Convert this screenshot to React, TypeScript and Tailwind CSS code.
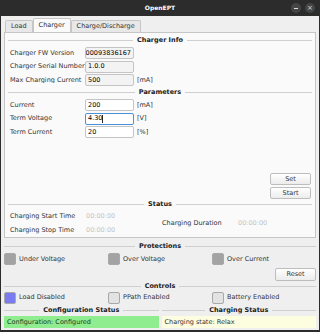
import React from 'react';

const FONT = { fontFamily: '"DejaVu Sans", "Liberation Sans", sans-serif' };

const Header: React.FC<{ title: string; className?: string }> = ({ title, className = '' }) => (
  <div className={`flex items-center gap-[4px] h-[10px] ${className}`}>
    <div className="flex-1 h-px bg-[#cfcfcf]" />
    <span className="font-bold text-[6.5px] text-[#202020] leading-none">{title}</span>
    <div className="flex-1 h-px bg-[#cfcfcf]" />
  </div>
);

const Field: React.FC<{
  label: string;
  value: string;
  unit?: string;
  readOnly?: boolean;
  focused?: boolean;
  scrolled?: boolean;
}> = ({ label, value, unit, readOnly, focused, scrolled }) => (
  <div className="flex items-center h-[12px]">
    <span className="w-[77px] shrink-0 pl-[2px] whitespace-nowrap overflow-hidden text-[#333]">{label}</span>
    <div
      className={`w-[49px] h-[12px] shrink-0 rounded-[2px] border flex items-center px-[2px] overflow-hidden whitespace-nowrap ${
        scrolled ? 'justify-end' : ''
      } ${focused ? 'border-[#4a90d9] bg-white' : readOnly ? 'border-[#c4c4c4] bg-[#f3f3f3]' : 'border-[#c4c4c4] bg-white'}`}
    >
      <span className="shrink-0">{value}</span>
      {focused && <span className="w-px h-[8px] bg-[#222]" />}
    </div>
    {unit && <span className="ml-[3px] text-[#333]">{unit}</span>}
  </div>
);

const Check: React.FC<{ label: string; color: string }> = ({ label, color }) => (
  <div className="flex items-center gap-[3px] w-[104px]">
    <div className={`w-[12px] h-[12px] rounded-[2px] border border-[#a8a8a8] ${color}`} />
    <span className="text-[#333]">{label}</span>
  </div>
);

const Btn: React.FC<{ label: string; className?: string }> = ({ label, className = '' }) => (
  <div
    className={`flex items-center justify-center rounded-[2px] border border-[#bdbdbd] bg-gradient-to-b from-[#ffffff] to-[#ececec] text-[#333] ${className}`}
  >
    {label}
  </div>
);

export default function App() {
  return (
    <div className="w-[320px] h-[332px] bg-[#2c2c2c] flex flex-col text-[6.5px] leading-none" style={FONT}>
      {/* title bar */}
      <div className="h-[16px] grid grid-cols-[1fr_auto_1fr] items-center px-[4px]">
        <div />
        <span className="text-white font-bold text-[6px]">OpenEPT</span>
        <div className="flex justify-end gap-[4px] pr-[1px]">
          <div className="w-[10px] h-[10px] rounded-full bg-[#454545] flex items-center justify-center">
            <div className="w-[4px] h-px bg-[#ddd]" />
          </div>
          <div className="w-[10px] h-[10px] rounded-full bg-[#454545] flex items-center justify-center text-[#ddd] text-[7px]">
            ×
          </div>
        </div>
      </div>

      <div className="flex-1 mx-[1px] mb-[2px] bg-[#efefef] flex flex-col px-[3px] pt-[2px]">
        {/* tabs */}
        <div className="flex items-end h-[14px] pl-[1px]">
          <div className="h-[12px] px-[5px] flex items-center border border-b-0 border-[#c6c6c6] bg-[#e8e8e8] rounded-t-[2px] text-[#333]">
            Load
          </div>
          <div className="h-[14px] px-[5px] flex items-center border border-b-0 border-[#c6c6c6] bg-[#fafafa] rounded-t-[2px] text-[#333]">
            Charger
          </div>
          <div className="h-[12px] px-[5px] flex items-center border border-b-0 border-[#c6c6c6] bg-[#e8e8e8] rounded-t-[2px] text-[#333]">
            Charge/Discharge
          </div>
        </div>

        {/* panel */}
        <div className="h-[206px] border border-[#c6c6c6] bg-[#fafafa] flex flex-col px-[3px] pt-[2px]">
          <Header title="Charger Info" />
          <div className="flex flex-col gap-[1.5px] mt-[2px]">
            <Field label="Charger FW Version" value="I000093836167" readOnly scrolled />
            <Field label="Charger Serial Number" value="1.0.0" readOnly />
            <Field label="Max Charging Current" value="500" unit="[mA]" readOnly />
          </div>
          <Header title="Parameters" className="mt-[1px]" />
          <div className="flex flex-col gap-[1.5px] mt-[2px]">
            <Field label="Current" value="200" unit="[mA]" />
            <Field label="Term Voltage" value="4.30" unit="[V]" focused />
            <Field label="Term Current" value="20" unit="[%]" />
          </div>
          <div className="flex flex-col items-end gap-[2px] mt-[35px] pr-[1px]">
            <Btn label="Set" className="w-[41px] h-[12px]" />
            <Btn label="Start" className="w-[41px] h-[12px]" />
          </div>
          <Header title="Status" />
          <div className="flex mt-[2px]">
            <div className="flex flex-col gap-[4px] w-[154px]">
              <div className="flex items-center h-[10px]">
                <span className="w-[78px] pl-[2px] text-[#333]">Charging Start Time</span>
                <span className="text-[#c4c4c4]">00:00:00</span>
              </div>
              <div className="flex items-center h-[10px]">
                <span className="w-[78px] pl-[2px] text-[#333]">Charging Stop Time</span>
                <span className="text-[#c4c4c4]">00:00:00</span>
              </div>
            </div>
            <div className="flex items-center h-[24px]">
              <span className="w-[76px] text-[#333]">Charging Duration</span>
              <span className="text-[#c4c4c4]">00:00:00</span>
            </div>
          </div>
        </div>

        {/* protections */}
        <Header title="Protections" className="mt-[3px]" />
        <div className="flex items-center h-[14px] mt-[1px]">
          <Check label="Under Voltage" color="bg-[#a3a3a3]" />
          <Check label="Over Voltage" color="bg-[#a3a3a3]" />
          <Check label="Over Current" color="bg-[#a3a3a3]" />
        </div>
        <div className="flex justify-end mt-[2px]">
          <Btn label="Reset" className="w-[41px] h-[13px]" />
        </div>

        {/* controls */}
        <Header title="Controls" />
        <div className="flex items-center h-[13px]">
          <Check label="Load Disabled" color="bg-[#7b7bf0] border-[#5f5fc8]" />
          <Check label="PPath Enabled" color="bg-[#e2e2e2]" />
          <Check label="Battery Enabled" color="bg-[#e2e2e2]" />
        </div>

        {/* status */}
        <div className="flex gap-[3px] mt-[1px]">
          <div className="flex-1 flex flex-col">
            <Header title="Configuration Status" />
            <div className="h-[12px] mt-[1px] bg-[#8fec8f] flex items-center pl-[3px] text-[#1e3a1e]">
              Configuration: Configured
            </div>
          </div>
          <div className="flex-1 flex flex-col">
            <Header title="Charging Status" />
            <div className="h-[12px] mt-[1px] bg-[#fdfde0] flex items-center pl-[3px] text-[#333]">
              Charging state: Relax
            </div>
          </div>
        </div>
      </div>
    </div>
  );
}
